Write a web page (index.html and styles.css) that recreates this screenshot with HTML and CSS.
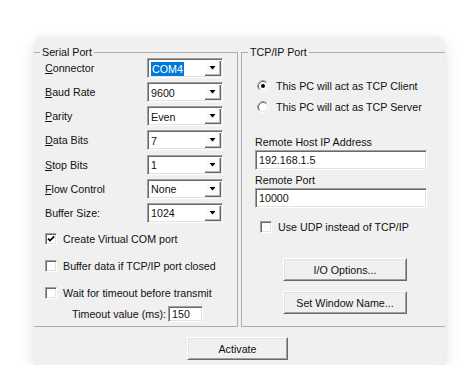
FILE: index.html
```html
<!DOCTYPE html>
<html>
<head>
<meta charset="utf-8">
<link rel="stylesheet" href="styles.css">
</head>
<body>
<div class="page">
  <div class="card">
    <div class="groups">
      <fieldset class="group serial">
        <legend>Serial Port</legend>
        <div class="fields">
          <div class="row"><span class="lbl"><u>C</u>onnector</span><div class="combo"><span class="val"><span class="sel">COM4</span></span><span class="drop"><svg width="7" height="4" viewBox="0 0 7 4"><polygon points="0.5,0 6.5,0 3.5,3.5" fill="#000"/></svg></span></div></div>
          <div class="row"><span class="lbl"><u>B</u>aud Rate</span><div class="combo"><span class="val">9600</span><span class="drop"><svg width="7" height="4" viewBox="0 0 7 4"><polygon points="0.5,0 6.5,0 3.5,3.5" fill="#000"/></svg></span></div></div>
          <div class="row"><span class="lbl"><u>P</u>arity</span><div class="combo"><span class="val">Even</span><span class="drop"><svg width="7" height="4" viewBox="0 0 7 4"><polygon points="0.5,0 6.5,0 3.5,3.5" fill="#000"/></svg></span></div></div>
          <div class="row"><span class="lbl"><u>D</u>ata Bits</span><div class="combo"><span class="val">7</span><span class="drop"><svg width="7" height="4" viewBox="0 0 7 4"><polygon points="0.5,0 6.5,0 3.5,3.5" fill="#000"/></svg></span></div></div>
          <div class="row"><span class="lbl"><u>S</u>top Bits</span><div class="combo"><span class="val">1</span><span class="drop"><svg width="7" height="4" viewBox="0 0 7 4"><polygon points="0.5,0 6.5,0 3.5,3.5" fill="#000"/></svg></span></div></div>
          <div class="row"><span class="lbl"><u>F</u>low Control</span><div class="combo"><span class="val">None</span><span class="drop"><svg width="7" height="4" viewBox="0 0 7 4"><polygon points="0.5,0 6.5,0 3.5,3.5" fill="#000"/></svg></span></div></div>
          <div class="row"><span class="lbl">Buffer Size:</span><div class="combo"><span class="val">1024</span><span class="drop"><svg width="7" height="4" viewBox="0 0 7 4"><polygon points="0.5,0 6.5,0 3.5,3.5" fill="#000"/></svg></span></div></div>
        </div>
        <div class="checks">
          <div class="check"><span class="box"><svg width="10" height="10" viewBox="0 0 10 10"><path d="M2 4.6 L4 6.6 L8.2 2.4" fill="none" stroke="#000" stroke-width="1.7"/></svg></span>Create Virtual COM port</div>
          <div class="check"><span class="box"></span>Buffer data if TCP/IP port closed</div>
          <div class="check"><span class="box"></span>Wait for timeout before transmit</div>
          <div class="timeout">Timeout value (ms):<span class="field small">150</span></div>
        </div>
      </fieldset>
      <fieldset class="group tcp">
        <legend>TCP/IP Port</legend>
        <div class="tcp-body">
          <div class="radios">
            <div class="radio"><svg width="12" height="12" viewBox="0 0 12 12"><circle cx="6" cy="6" r="5" fill="#fff"/><path d="M2.11 9.89 A5.5 5.5 0 0 1 9.89 2.11" fill="none" stroke="#a0a0a0"/><path d="M9.89 2.11 A5.5 5.5 0 0 1 2.11 9.89" fill="none" stroke="#fff"/><path d="M2.82 9.18 A4.5 4.5 0 0 1 9.18 2.82" fill="none" stroke="#696969"/><path d="M9.18 2.82 A4.5 4.5 0 0 1 2.82 9.18" fill="none" stroke="#e3e3e3"/><circle cx="6" cy="6" r="2" fill="#000"/></svg>This PC will act as TCP Client</div>
            <div class="radio"><svg width="12" height="12" viewBox="0 0 12 12"><circle cx="6" cy="6" r="5" fill="#fff"/><path d="M2.11 9.89 A5.5 5.5 0 0 1 9.89 2.11" fill="none" stroke="#a0a0a0"/><path d="M9.89 2.11 A5.5 5.5 0 0 1 2.11 9.89" fill="none" stroke="#fff"/><path d="M2.82 9.18 A4.5 4.5 0 0 1 9.18 2.82" fill="none" stroke="#696969"/><path d="M9.18 2.82 A4.5 4.5 0 0 1 2.82 9.18" fill="none" stroke="#e3e3e3"/></svg>This PC will act as TCP Server</div>
          </div>
          <div class="lbl-top host">Remote Host IP Address</div>
          <div class="field wide">192.168.1.5</div>
          <div class="lbl-top port">Remote Port</div>
          <div class="field wide">10000</div>
          <div class="check udp"><span class="box"></span>Use UDP instead of TCP/IP</div>
          <div class="buttons">
            <button class="btn io">I/O Options...</button>
            <button class="btn win">Set Window Name...</button>
          </div>
        </div>
      </fieldset>
    </div>
    <div class="footer">
      <button class="btn activate">Activate</button>
    </div>
  </div>
</div>
</body>
</html>
```

FILE: styles.css
```css
* { box-sizing: border-box; }
html, body { margin: 0; padding: 0; background: #fff; }
body {
  font-family: "Liberation Sans", Arial, sans-serif;
  font-size: 10.7px;
  color: #111;
}
.page { padding: 37px 0 0 34px; }
.card {
  width: 411px;
  height: 328px;
  background: #f0f0f0;
  border-radius: 8px;
  box-shadow: 0 8px 18px rgba(0,0,0,0.11), 0 0 6px rgba(0,0,0,0.05);
  overflow: hidden;
  display: flex;
  flex-direction: column;
}
.groups { display: flex; gap: 3px; padding-top: 9px; }
.group {
  margin: 0;
  padding: 0;
  min-width: 0;
  width: 204px;
  height: 281px;
  border: 1px solid #adadad;
}
.serial { border-left: none; }
.tcp { border-right: none; }
.group legend {
  margin-left: 6px;
  padding: 0 2px;
  line-height: 13px;
}
.fields {
  display: flex;
  flex-direction: column;
  gap: 4.15px;
  padding-left: 11px;
  margin-top: -1px;
}
.row { display: flex; align-items: center; height: 20px; }
.lbl { width: 102px; }
.combo {
  display: flex;
  width: 76px;
  height: 20px;
  background: #fff;
  border-top: 1px solid #a0a0a0;
  border-left: 1px solid #a0a0a0;
  border-right: 1px solid #fff;
  border-bottom: 1px solid #fff;
  box-shadow: inset 1px 1px 0 #696969, inset -1px -1px 0 #e3e3e3;
  padding: 2px 1px 1px 2px;
}
.val { flex: 1; display: flex; align-items: center; padding-left: 1px; }
.sel { background: #0078d7; color: #fff; padding: 0 1px; line-height: 14px; }
.drop {
  width: 16px;
  display: flex;
  align-items: center;
  justify-content: center;
  background: #fbfbfb;
  border-right: 1px solid #696969;
  border-bottom: 1px solid #696969;
  box-shadow: inset -1px -1px 0 #b5b5b5;
}
.checks { padding-left: 11px; margin-top: 10px; display: flex; flex-direction: column; }
.check { display: flex; align-items: center; height: 13px; }
.checks .check + .check { margin-top: 14px; }
.box {
  width: 12px;
  height: 12px;
  margin-right: 6px;
  background: #fff;
  border-top: 1px solid #a0a0a0;
  border-left: 1px solid #a0a0a0;
  border-right: 1px solid #fff;
  border-bottom: 1px solid #fff;
  box-shadow: inset 1px 1px 0 #696969, inset -1px -1px 0 #e3e3e3;
  display: flex;
  align-items: center;
  justify-content: center;
  flex: none;
}
.timeout {
  display: flex;
  align-items: center;
  margin-top: 6px;
  padding-left: 27px;
}
.field {
  display: flex;
  align-items: center;
  background: #fff;
  border-top: 1px solid #a0a0a0;
  border-left: 1px solid #a0a0a0;
  border-right: 1px solid #fff;
  border-bottom: 1px solid #fff;
  box-shadow: inset 1px 1px 0 #696969, inset -1px -1px 0 #e3e3e3;
  padding-left: 3px;
}
.small { width: 35px; height: 16px; margin-left: 2px; }
.tcp-body { padding-left: 13px; }
.radios { margin-top: 20px; display: flex; flex-direction: column; gap: 8px; }
.radio { display: flex; align-items: center; height: 13px; padding-left: 2px; }
.radio svg { margin-right: 7px; flex: none; }
.lbl-top { line-height: 13px; }
.host { margin-top: 23px; }
.port { margin-top: 4px; }
.wide { width: 172px; height: 20px; margin-top: 1px; }
.udp { margin-top: 12px; padding-left: 5px; }
.buttons { display: flex; flex-direction: column; gap: 10px; margin-top: 25px; padding-left: 28px; }
.btn {
  font: inherit;
  color: #111;
  background: #f0f0f0;
  border-top: 1px solid #fff;
  border-left: 1px solid #fff;
  border-right: 1px solid #696969;
  border-bottom: 1px solid #696969;
  box-shadow: inset 1px 1px 0 #e3e3e3, inset -1px -1px 0 #a0a0a0;
  padding: 0;
  height: 23px;
}
.io, .win { width: 124px; }
.footer { padding: 10px 0 0 153px; }
.activate { width: 101px; }
```
